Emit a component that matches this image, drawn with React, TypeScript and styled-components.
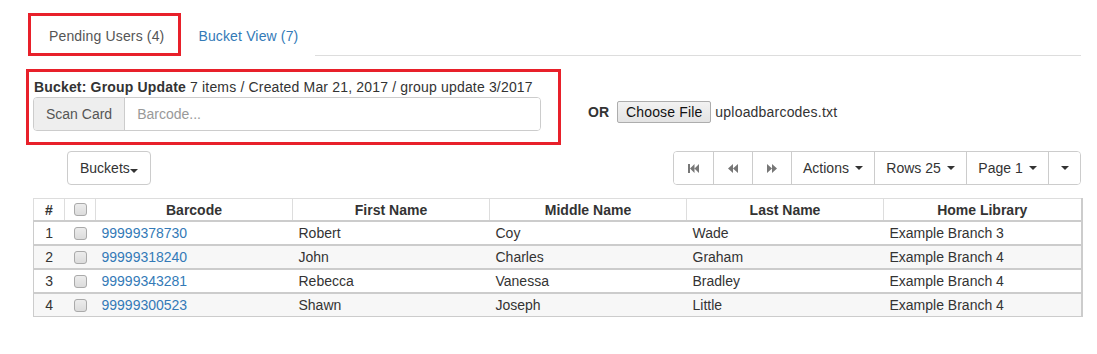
import React from 'react';
import styled, { createGlobalStyle } from 'styled-components';

interface IUser {
  id: number;
  barcode: string;
  first: string;
  middle: string;
  last: string;
  library: string;
}

const users: IUser[] = [
  { id: 1, barcode: '99999378730', first: 'Robert', middle: 'Coy', last: 'Wade', library: 'Example Branch 3' },
  { id: 2, barcode: '99999318240', first: 'John', middle: 'Charles', last: 'Graham', library: 'Example Branch 4' },
  { id: 3, barcode: '99999343281', first: 'Rebecca', middle: 'Vanessa', last: 'Bradley', library: 'Example Branch 4' },
  { id: 4, barcode: '99999300523', first: 'Shawn', middle: 'Joseph', last: 'Little', library: 'Example Branch 4' },
];

const columns = ['#', '', 'Barcode', 'First Name', 'Middle Name', 'Last Name', 'Home Library'];
const colWidths = [31, 31, 197, 197, 197, 197, 198];

const GlobalStyle = createGlobalStyle`
  body {
    margin: 0;
    background: #fff;
    font-family: "Liberation Sans", Arial, sans-serif;
    font-size: 14px;
    line-height: 20px;
    color: #333;
  }
`;

const Page = styled.div`
  padding: 13px 16px 20px 33px;
`;

const Tabs = styled.ul`
  display: flex;
  margin: 0 0 0 -5px;
  padding: 0;
  list-style: none;
  border-bottom: 1px solid #ddd;
`;

const Tab = styled.li<{ $active?: boolean }>`
  box-sizing: border-box;
  height: 43px;
  margin-bottom: -1px;
  padding: ${(p) => (p.$active ? '10px 14px 7px 18px' : '13px 17px 10px 17px')};
  border: ${(p) => (p.$active ? '3px solid #e8202a' : 'none')};
  background: #fff;
  color: ${(p) => (p.$active ? '#555' : '#337ab7')};
  letter-spacing: 0.15px;
  cursor: pointer;
`;

const Section = styled.div`
  display: flex;
  align-items: center;
  margin-top: 13px;
`;

const BucketBox = styled.div`
  box-sizing: border-box;
  width: 535px;
  margin-left: -7px;
  padding: 5px 17px 11px 4px;
  border: 3px solid #e8202a;
`;

const BucketInfo = styled.div`
  margin-left: 1px;
  white-space: nowrap;
  letter-spacing: 0.17px;
`;

const InputGroup = styled.div`
  display: flex;
  width: 508px;
  height: 34px;
  box-sizing: border-box;
  border: 1px solid #ccc;
  border-radius: 4px;
  overflow: hidden;
`;

const Addon = styled.span`
  display: flex;
  align-items: center;
  padding: 0 12px;
  background: #eee;
  border-right: 1px solid #ccc;
  color: #555;
`;

const BarcodeInput = styled.input`
  flex: 1;
  border: none;
  outline: none;
  padding: 0 12px;
  font: inherit;
  color: #555;
  &::placeholder {
    color: #999;
  }
`;

const FilePart = styled.div`
  display: flex;
  align-items: center;
  margin-left: 27px;
  padding-top: 9px;
`;

const OrLabel = styled.span`
  font-weight: bold;
  margin-right: 8px;
`;

const FileButton = styled.button`
  height: 22px;
  padding: 0 8px;
  border: 1px solid #adadad;
  border-radius: 2px;
  background: linear-gradient(#f2f2f2, #e3e3e3);
  font-family: "Liberation Sans", Arial, sans-serif;
  font-size: 14px;
  letter-spacing: 0.15px;
  color: #111;
  margin-right: 4px;
`;

const FileName = styled.span`
  letter-spacing: 0.2px;
`;

const Toolbar = styled.div`
  display: flex;
  justify-content: space-between;
  margin-top: 6px;
`;

const Button = styled.button`
  box-sizing: border-box;
  height: 34px;
  margin-left: 34px;
  padding: 0 12px;
  border: 1px solid #ccc;
  border-radius: 4px;
  background: #fff;
  font-family: inherit;
  font-size: 14px;
  color: #333;
`;

const BtnGroup = styled.div`
  display: flex;
  height: 34px;
  box-sizing: border-box;
  border: 1px solid #ccc;
  border-radius: 4px;
  overflow: hidden;
`;

const GroupBtn = styled.button<{ $w: number }>`
  width: ${(p) => p.$w}px;
  display: flex;
  align-items: center;
  justify-content: center;
  gap: 4px;
  padding: 0;
  border: none;
  border-left: 1px solid #ccc;
  background: #fff;
  font-family: inherit;
  font-size: 14px;
  color: #333;
  &:first-child {
    border-left: none;
  }
`;

const Caret = styled.span<{ $tight?: boolean }>`
  display: inline-block;
  width: 0;
  height: 0;
  margin-left: ${(p) => (p.$tight ? '0' : '2px')};
  border-top: 4px solid #333;
  border-left: 4px solid transparent;
  border-right: 4px solid transparent;
`;

const Table = styled.table`
  width: 1048px;
  margin-top: 13px;
  table-layout: fixed;
  border-collapse: collapse;
  border: 1px solid #ccc;
  border-right-width: 2px;
`;

const Th = styled.th`
  height: 21px;
  padding: 0 5px;
  border: 1px solid #ddd;
  border-bottom: 2px solid #ccc;
  text-align: center;
  font-weight: bold;
  vertical-align: middle;
`;

const Row = styled.tr`
  background: #fff;
  &:nth-child(even) {
    background: #f7f7f7;
  }
`;

const Td = styled.td<{ $center?: boolean }>`
  height: 22px;
  padding: 0 6px;
  border-top: 2px solid #ccc;
  text-align: ${(p) => (p.$center ? 'center' : 'left')};
  vertical-align: middle;
  white-space: nowrap;
`;

const Link = styled.a`
  color: #337ab7;
  text-decoration: none;
`;

const Checkbox = styled.input.attrs({ type: 'checkbox' })`
  appearance: none;
  display: block;
  width: 13px;
  height: 13px;
  margin: 0 auto;
  border: 1px solid #aaa;
  border-radius: 3px;
  background: linear-gradient(#ececec, #dcdcdc);
`;

const Icon = styled.svg`
  display: block;
  fill: #777;
`;

const FastBackward = () => (
  <Icon width="11" height="9" viewBox="0 0 11 9">
    <rect x="0" y="0" width="2" height="9" />
    <path d="M2 4.5 L6.5 0 V9Z M6.5 4.5 L11 0 V9Z" />
  </Icon>
);

const Backward = () => (
  <Icon width="10" height="9" viewBox="0 0 10 9">
    <path d="M0 4.5 L5 0 V9Z M5 4.5 L10 0 V9Z" />
  </Icon>
);

const Forward = () => (
  <Icon width="10" height="9" viewBox="0 0 10 9">
    <path d="M10 4.5 L5 0 V9Z M5 4.5 L0 0 V9Z" />
  </Icon>
);

export default function App() {
  return (
    <Page>
      <GlobalStyle />
      <Tabs>
        <Tab $active>Pending Users (4)</Tab>
        <Tab>Bucket View (7)</Tab>
      </Tabs>

      <Section>
        <BucketBox>
          <BucketInfo>
            <b>Bucket: Group Update</b> 7 items / Created Mar 21, 2017 / group update 3/2017
          </BucketInfo>
          <InputGroup>
            <Addon>Scan Card</Addon>
            <BarcodeInput placeholder="Barcode..." />
          </InputGroup>
        </BucketBox>
        <FilePart>
          <OrLabel>OR</OrLabel>
          <FileButton>Choose File</FileButton>
          <FileName>uploadbarcodes.txt</FileName>
        </FilePart>
      </Section>

      <Toolbar>
        <Button>
          Buckets<Caret $tight />
        </Button>
        <BtnGroup>
          <GroupBtn $w={39}><FastBackward /></GroupBtn>
          <GroupBtn $w={39}><Backward /></GroupBtn>
          <GroupBtn $w={39}><Forward /></GroupBtn>
          <GroupBtn $w={83}>Actions<Caret /></GroupBtn>
          <GroupBtn $w={92}>Rows 25<Caret /></GroupBtn>
          <GroupBtn $w={82}>Page 1<Caret /></GroupBtn>
          <GroupBtn $w={32}><Caret $tight /></GroupBtn>
        </BtnGroup>
      </Toolbar>

      <Table>
        <colgroup>
          {colWidths.map((w, i) => (
            <col key={i} style={{ width: w }} />
          ))}
        </colgroup>
        <thead>
          <tr>
            {columns.map((c, i) => (
              <Th key={i}>{i === 1 ? <Checkbox /> : c}</Th>
            ))}
          </tr>
        </thead>
        <tbody>
          {users.map((u) => (
            <Row key={u.id}>
              <Td $center>{u.id}</Td>
              <Td $center><Checkbox /></Td>
              <Td><Link href="#">{u.barcode}</Link></Td>
              <Td>{u.first}</Td>
              <Td>{u.middle}</Td>
              <Td>{u.last}</Td>
              <Td>{u.library}</Td>
            </Row>
          ))}
        </tbody>
      </Table>
    </Page>
  );
}
